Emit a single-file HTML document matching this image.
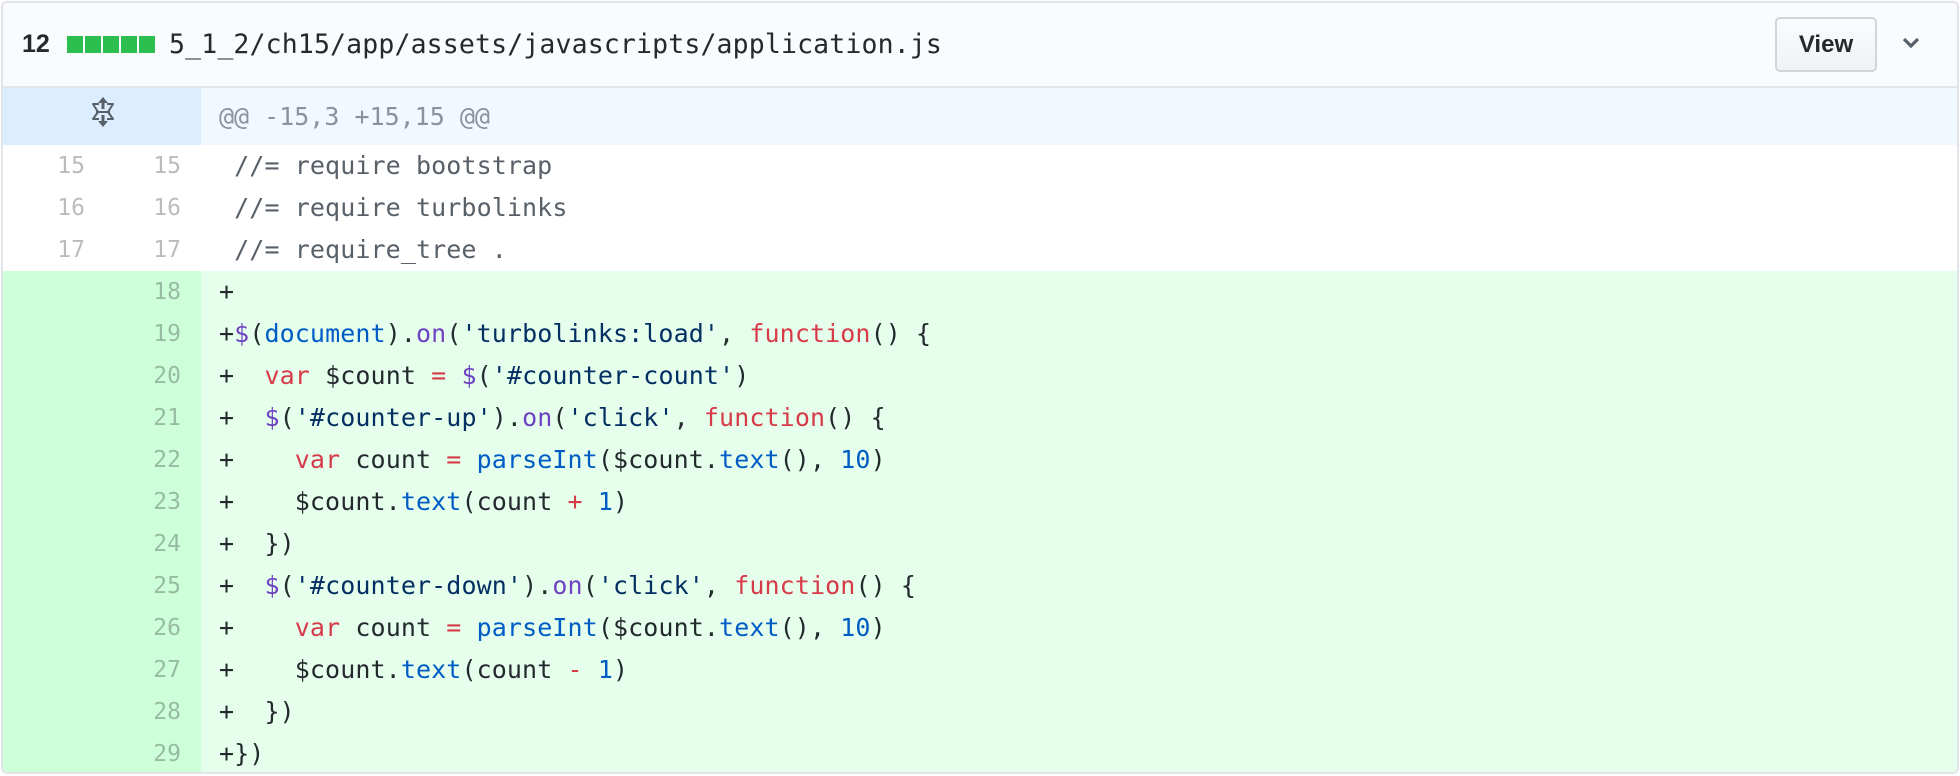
<!DOCTYPE html>
<html><head><meta charset="utf-8"><style>
*{margin:0;padding:0;box-sizing:border-box}
body{width:1960px;height:776px;background:#fff;overflow:hidden;font-family:"DejaVu Sans Mono","Liberation Mono",monospace}
.box{position:absolute;left:1px;top:1px;width:1958px;height:773px;border:2px solid #e1e4e8;border-radius:6px;overflow:hidden}
.hdr{height:85px;background:#fafbfc;border-bottom:2px solid #e1e4e8;position:relative}
.hdr .n{position:absolute;left:19px;top:27px;font:bold 25px "Liberation Sans",sans-serif;color:#24292e;}
.blk{position:absolute;top:33px;width:16px;height:17px;background:#2cbe4e}
.fn{position:absolute;left:166px;top:22px;font-size:26.5px;letter-spacing:0.15px;color:#24292e;line-height:40px}
.btn{position:absolute;left:1772px;top:14px;width:102px;height:55px;border:2px solid #d1d5da;border-radius:5px;background:linear-gradient(#fafbfc,#eff3f6);font:bold 24px "Liberation Sans",sans-serif;color:#24292e;text-align:center;line-height:51px}
.row{height:42px;display:flex;line-height:42px;font-size:25px;letter-spacing:0.1px;white-space:pre}
.g1,.g2{width:100px;text-align:right;color:rgba(27,31,35,.3);font-size:23px;letter-spacing:0}
.g1{width:98px;padding-right:16px}
.g2{padding-right:20px}
.c{flex:1;padding-left:18px;color:#24292e}
.ctx .c{color:#586069}
.add .g1,.add .g2{background:#cdffd8}
.add .c{background:#e6ffed}
.hunk{height:57px;display:flex}
.hunk .gg{width:198px;background:#dbedff;position:relative}
.hunk .c{background:#f1f8ff;color:#8a939d;line-height:57px;padding-left:18px;font-size:25px}
.k{color:#d73a49}.p{color:#6f42c1}.b{color:#005cc5}.s{color:#032f62}
</style></head><body><div class="box">
<div class="hdr">
<div class="n">12</div>
<div class="blk" style="left:64px"></div><div class="blk" style="left:82px"></div><div class="blk" style="left:100px"></div><div class="blk" style="left:118px"></div><div class="blk" style="left:136px"></div>
<div class="fn">5_1_2/ch15/app/assets/javascripts/application.js</div>
<div class="btn">View</div>
<svg style="position:absolute;left:1898px;top:33px" width="20" height="14" viewBox="0 0 20 14"><path d="M3 3l7 7 7-7" fill="none" stroke="#586069" stroke-width="3.2"/></svg>
</div>
<div class="hunk"><div class="gg"><svg style="position:absolute;left:86px;top:8px" width="28" height="32" viewBox="0 0 28 32"><path d="M14 1l-5 6h3.5v6h3V7H19z M14 31l-5-6h3.5v-6h3v6H19z" fill="#586069"/><path d="M10 8H4l5 8-5 7h6 M18 8h6l-5 8 5 7h-6 M7 16h14" fill="none" stroke="#586069" stroke-width="2" stroke-linejoin="round"/></svg></div><div class="c">@@ -15,3 +15,15 @@</div></div>
<div class="row ctx"><div class="g1">15</div><div class="g2">15</div><div class="c"> //= require bootstrap</div></div>
<div class="row ctx"><div class="g1">16</div><div class="g2">16</div><div class="c"> //= require turbolinks</div></div>
<div class="row ctx"><div class="g1">17</div><div class="g2">17</div><div class="c"> //= require_tree .</div></div>
<div class="row add"><div class="g1"></div><div class="g2">18</div><div class="c">+</div></div>
<div class="row add"><div class="g1"></div><div class="g2">19</div><div class="c">+<span class="p">$</span>(<span class="b">document</span>).<span class="p">on</span>(<span class="s">'turbolinks:load'</span>, <span class="k">function</span>() {</div></div>
<div class="row add"><div class="g1"></div><div class="g2">20</div><div class="c">+  <span class="k">var</span> $count <span class="k">=</span> <span class="p">$</span>(<span class="s">'#counter-count'</span>)</div></div>
<div class="row add"><div class="g1"></div><div class="g2">21</div><div class="c">+  <span class="p">$</span>(<span class="s">'#counter-up'</span>).<span class="p">on</span>(<span class="s">'click'</span>, <span class="k">function</span>() {</div></div>
<div class="row add"><div class="g1"></div><div class="g2">22</div><div class="c">+    <span class="k">var</span> count <span class="k">=</span> <span class="b">parseInt</span>($count.<span class="b">text</span>(), <span class="b">10</span>)</div></div>
<div class="row add"><div class="g1"></div><div class="g2">23</div><div class="c">+    $count.<span class="b">text</span>(count <span class="k">+</span> <span class="b">1</span>)</div></div>
<div class="row add"><div class="g1"></div><div class="g2">24</div><div class="c">+  })</div></div>
<div class="row add"><div class="g1"></div><div class="g2">25</div><div class="c">+  <span class="p">$</span>(<span class="s">'#counter-down'</span>).<span class="p">on</span>(<span class="s">'click'</span>, <span class="k">function</span>() {</div></div>
<div class="row add"><div class="g1"></div><div class="g2">26</div><div class="c">+    <span class="k">var</span> count <span class="k">=</span> <span class="b">parseInt</span>($count.<span class="b">text</span>(), <span class="b">10</span>)</div></div>
<div class="row add"><div class="g1"></div><div class="g2">27</div><div class="c">+    $count.<span class="b">text</span>(count <span class="k">-</span> <span class="b">1</span>)</div></div>
<div class="row add"><div class="g1"></div><div class="g2">28</div><div class="c">+  })</div></div>
<div class="row add"><div class="g1"></div><div class="g2">29</div><div class="c">+})</div></div>
</div></body></html>
